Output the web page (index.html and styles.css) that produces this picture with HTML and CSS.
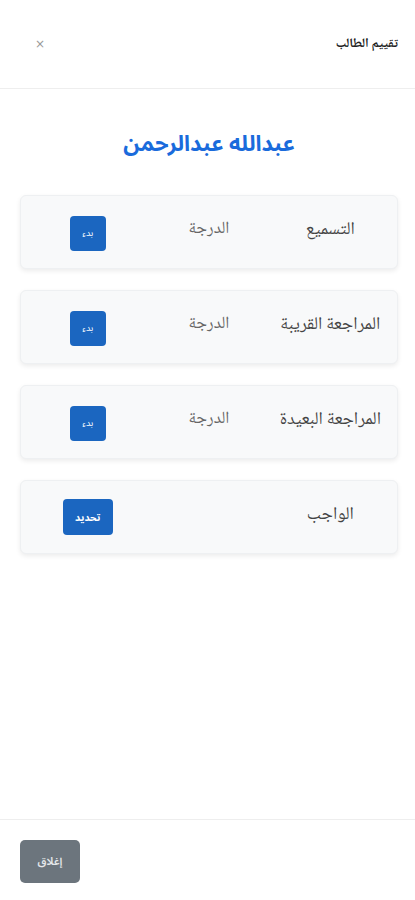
FILE: index.html
```html
<!DOCTYPE html>
<html lang="ar" dir="rtl">
<head>
    <meta charset="UTF-8">
    <meta name="viewport" content="width=device-width, initial-scale=1.0">
    <title>تقييم الطالب</title>
    <link rel="stylesheet" href="styles.css">
</head>

<body>
    <div class="modal">
        <div class="modal-header">
            <h5 class="modal-title">تقييم الطالب</h5>
            <button class="close-x">&times;</button>
        </div>

        <div class="modal-body">
            <h3 class="student-name">عبدالله عبدالرحمن</h3>

            <div class="eval-card">
                <div class="col label">التسميع</div>
                <div class="col grade">الدرجة</div>
                <div class="col"><button class="start-button">بدء</button></div>
            </div>

            <div class="eval-card">
                <div class="col label">المراجعة القريبة</div>
                <div class="col grade">الدرجة</div>
                <div class="col"><button class="start-button">بدء</button></div>
            </div>

            <div class="eval-card">
                <div class="col label">المراجعة البعيدة</div>
                <div class="col grade">الدرجة</div>
                <div class="col"><button class="start-button">بدء</button></div>
            </div>

            <div class="eval-card">
                <div class="col label">الواجب</div>
                <div class="col grade"></div>
                <div class="col"><button class="set-button">تحديد</button></div>
            </div>
        </div>

        <div class="modal-footer">
            <button class="close-button">إغلاق</button>
        </div>
    </div>
</body>
</html>
```

FILE: styles.css
```css
body
{
    margin: 0;
    background: #fff;
    font-family: "Noto Sans Arabic", "DejaVu Sans", sans-serif;
    color: #222;
}

.modal
{
    display: flex;
    flex-direction: column;
    height: 900px;
}

.modal-header
{
    height: 88px;
    display: flex;
    align-items: center;
    justify-content: space-between;
    padding: 0 17px 0 35px;
    border-bottom: 1px solid #eeeeee;
}

.modal-title
{
    margin: 0;
    font-family: "Noto Naskh Arabic";
    font-size: 13px;
    font-weight: bold;
    line-height: 24px;
    color: #222;
}

.close-x
{
    background: none;
    border: none;
    color: #999;
    font-family: "DejaVu Sans", sans-serif;
    font-size: 12px;
    padding: 0;
    cursor: pointer;
}

.modal-body
{
    flex: 1;
    padding: 34px 17px 0 20px;
}

.student-name
{
    margin: 0 0 30px;
    text-align: center;
    font-size: 22px;
    font-weight: bold;
    line-height: 42px;
    color: #1a6bdc;
}

.eval-card
{
    height: 74px;
    box-sizing: border-box;
    margin-bottom: 21px;
    padding: 0 6px;
    display: flex;
    align-items: center;
    background: #f8f9fa;
    border: 1px solid #eef0f2;
    border-radius: 6px;
    box-shadow: 0 2px 5px rgba(0, 0, 0, 0.08);
}

.col
{
    flex: 1;
    text-align: center;
}

/* النصوص داخل البطاقات */
.label
{
    font-family: "Noto Naskh Arabic";
    font-size: 18px;
    line-height: 30px;
    margin-top: -4px;
    color: #444;
}

.grade
{
    font-family: "Noto Naskh Arabic";
    font-size: 17px;
    line-height: 30px;
    margin-top: -4px;
    color: #666;
}

.start-button
{
    width: 36px;
    height: 35px;
    padding: 0;
    border: none;
    border-radius: 4px;
    background-color: #1b66c0;
    color: #fff;
    font-family: "Noto Sans Arabic", sans-serif;
    font-size: 9px;
    cursor: pointer;
}

.set-button
{
    width: 50px;
    height: 36px;
    padding: 0;
    border: none;
    border-radius: 4px;
    background-color: #1b66c0;
    color: #fff;
    font-family: "Noto Sans Arabic", sans-serif;
    font-size: 10px;
    font-weight: bold;
    cursor: pointer;
}

.modal-footer
{
    height: 81px;
    padding: 20px;
    box-sizing: border-box;
    border-top: 1px solid #eeeeee;
    display: flex;
    justify-content: flex-end;
}

.close-button
{
    width: 60px;
    height: 43px;
    border: none;
    border-radius: 5px;
    background-color: #6c757d;
    color: #e4e7ea;
    font-family: "Noto Sans Arabic", sans-serif;
    font-size: 11px;
    font-weight: 600;
    cursor: pointer;
}
```
